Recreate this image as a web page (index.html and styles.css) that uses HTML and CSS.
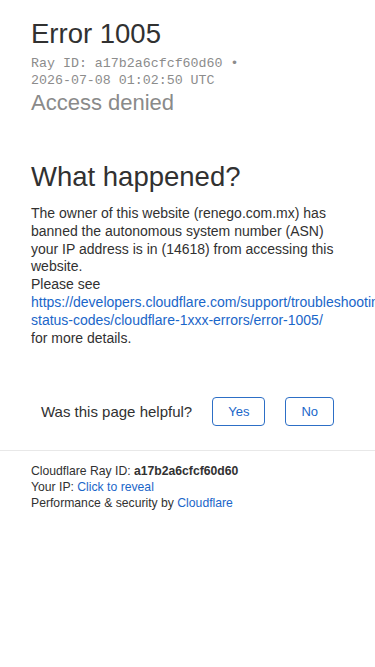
FILE: index.html
```html
<!DOCTYPE html>
<html lang="en">
<head>
    <meta charset="UTF-8">
    <meta name="viewport" content="width=device-width, initial-scale=1.0">
    <title>Access denied | renego.com.mx used Cloudflare to restrict access</title>
    <link rel="stylesheet" href="styles.css">
</head>
<body>
    <div class="container">
        <header class="error-header">
            <h1 class="error-title">Error 1005</h1>
            <p class="ray-info">Ray ID: a17b2a6cfcf60d60 &bull;<br>2026-07-08 01:02:50 UTC</p>
            <h2 class="error-subtitle">Access denied</h2>
        </header>

        <section class="what-happened">
            <h2>What happened?</h2>
            <p>The owner of this website (renego.com.mx) has banned the autonomous system number (ASN) your IP address is in (14618) from accessing this website.<br>
            Please see <a href="#">https://developers.cloudflare.com/support/troubleshooting/http-status-codes/cloudflare-1xxx-errors/error-1005/</a><br>
            for more details.</p>
        </section>

        <div class="feedback">
            <span class="feedback-question">Was this page helpful?</span>
            <button class="feedback-btn">Yes</button>
            <button class="feedback-btn">No</button>
        </div>
    </div>

    <footer class="footer">
        <p>Cloudflare Ray ID: <strong>a17b2a6cfcf60d60</strong></p>
        <p>Your IP: <a href="#">Click to reveal</a></p>
        <p>Performance &amp; security by <a href="#">Cloudflare</a></p>
    </footer>
</body>
</html>
```

FILE: styles.css
```css
body {
    font-family: "Liberation Sans", Arial, sans-serif;
    color: #313131;
    margin: 0;
    background-color: white;
}
a {
    color: #1a66c9;
    text-decoration: none;
}
.container {
    padding: 17px 31px 0;
}
.error-title {
    font-size: 27.5px;
    line-height: 33px;
    font-weight: normal;
    margin: 0;
}
.ray-info {
    font-family: "Liberation Mono", "Courier New", monospace;
    font-size: 13.3px;
    line-height: 17px;
    color: #8c8c8c;
    margin: 5px 0 0;
}
.error-subtitle {
    font-size: 22px;
    line-height: 26px;
    font-weight: normal;
    color: #8a8a8a;
    margin: 1px 0 0;
}
.what-happened {
    margin-top: 44px;
}
.what-happened h2 {
    font-size: 27.5px;
    line-height: 33px;
    font-weight: normal;
    margin: 0;
}
.what-happened p {
    font-size: 14px;
    line-height: 17.8px;
    margin: 12px 0 0;
}
.feedback {
    display: flex;
    align-items: center;
    justify-content: center;
    gap: 20px;
    margin-top: 50px;
}
.feedback-question {
    font-size: 15px;
}
.feedback-btn {
    font-family: "Liberation Sans", Arial, sans-serif;
    font-size: 13px;
    line-height: 17px;
    color: #1a66c9;
    background-color: white;
    border: 1px solid #2d6fc6;
    border-radius: 4px;
    padding: 5px 15px;
    cursor: pointer;
}
.footer {
    margin-top: 24px;
    border-top: 1px solid #e8e8e8;
    padding: 12px 31px 0;
    font-size: 12.2px;
    line-height: 16px;
}
.footer p {
    margin: 0;
}
```
